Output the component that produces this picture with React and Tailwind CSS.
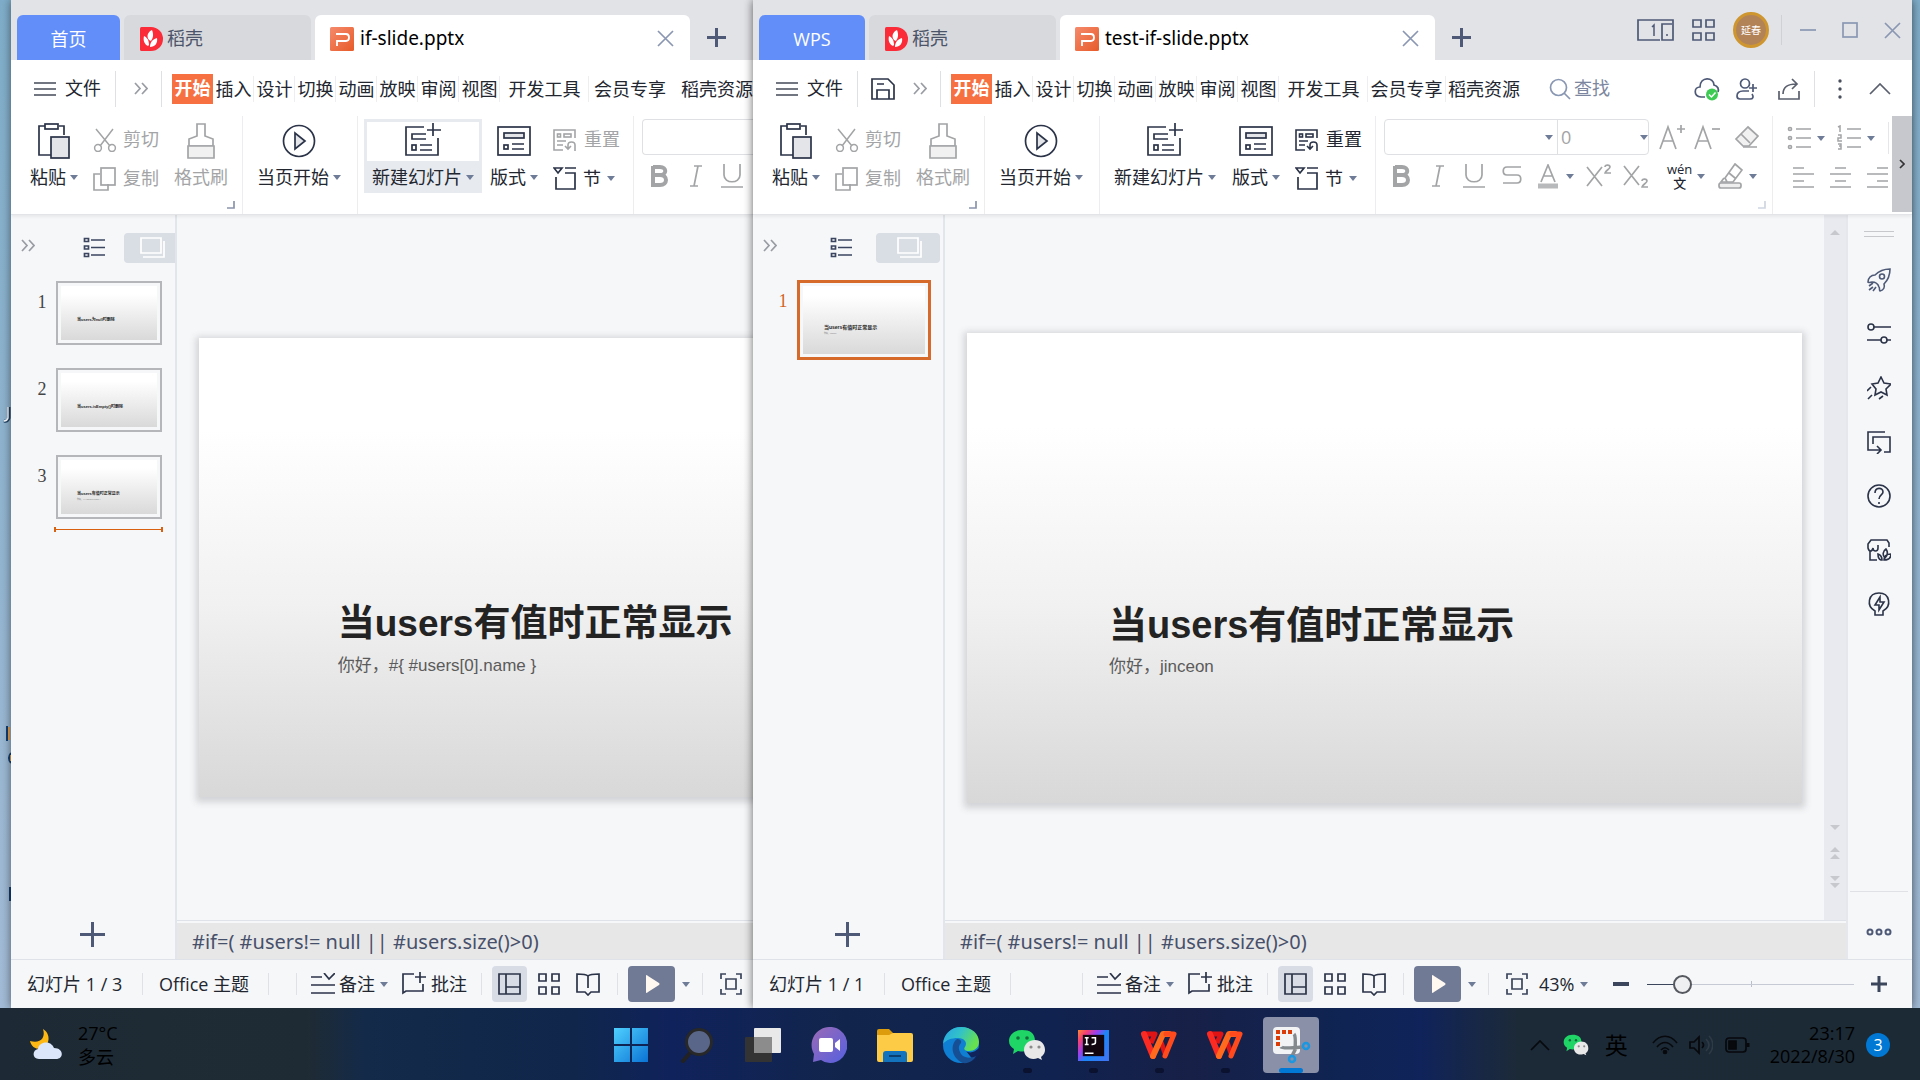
import React from "react";

const DARK = "#2b3348";
const SLATE = "#4d5976";
const MUTE = "#a3a4a6";

function Ic({ w = 24, h = 24, c = DARK, sw = 1.7, fill = "none", children, className = "" }) {
  return (
    <svg width={w} height={h} viewBox={`0 0 ${w} ${h}`} fill={fill} stroke={c} strokeWidth={sw} className={`shrink-0 ${className}`} aria-hidden="true">
      {children}
    </svg>
  );
}

const Caret = ({ c = "#6f7c98" }) => (
  <Ic w={8} h={5} c="none" fill={c}><path d="M0 0h8L4 5z" /></Ic>
);

/* ---------- ribbon icons ---------- */
const PasteIcon = () => (
  <Ic w={34} h={36}>
    <path d="M8 3H2v29h12M22 3h5v9" />
    <rect x="8" y="1" width="13" height="5" />
    <rect x="14" y="14" width="18" height="21" fill="#e3e5e8" />
  </Ic>
);
const CutIcon = () => (
  <Ic c={MUTE} sw={1.5}>
    <path d="M3 1l14 17M20 1L7 18" />
    <circle cx="5" cy="20" r="3.4" /><circle cx="19" cy="20" r="3.4" />
  </Ic>
);
const CopyIcon = () => (
  <Ic c={MUTE}>
    <path d="M7 7H1v16h14v-6" /><rect x="8" y="1" width="14" height="17" />
  </Ic>
);
const BrushIcon = () => (
  <Ic w={30} h={36} c={MUTE}>
    <path d="M11 1h8v12l8 3v7H3v-7l8-3z" fill="#fff" />
    <path d="M2 23h26v12H2z" fill="#f1f1f1" />
  </Ic>
);
const PlayCircle = () => (
  <Ic w={34} h={34}><circle cx="17" cy="17" r="15.5" /><path d="M13 9v16l10-8z" fill="#e3e5e8" /></Ic>
);
const NewSlideIcon = () => (
  <Ic w={38} h={34}>
    <path d="M20 4H2v28h32V15M29 0v13M23 7h14" />
    <path d="M22 11H8v5h14M16 22h12M16 27h12" /><rect x="8" y="22" width="4" height="5" />
  </Ic>
);
const LayoutIcon = () => (
  <Ic w={34} h={30}>
    <rect x="1" y="1" width="32" height="28" /><rect x="7" y="7" width="20" height="5" fill="#e3e5e8" />
    <rect x="7" y="19" width="4" height="4" /><path d="M15 18h12M15 23h12" />
  </Ic>
);
const ResetIcon = ({ c }) => (
  <Ic w={24} h={24} c={c} sw={1.6}>
    <path d="M10 22H1V2h21v8" /><rect x="4.500" y="6" width="3" height="3" /><rect x="11" y="6" width="7" height="3" />
    <path d="M4 13h9M4 17h6M12 18l3 3 3-3M15 20v-3c0-4 7-4 7 0v6" />
  </Ic>
);
const SectionIcon = () => (
  <Ic w={24} h={25}><path d="M1 2h8L5 7zM12 2h11M12 7h10v16H3V11" /></Ic>
);
const CornerIcon = ({ c = "#8a94aa" }) => <Ic w={8} h={8} c={c}><path d="M7 0v7H0" /></Ic>;

const Letter = ({ children, sup, minus }) => (
  <Ic w={26} h={26} c={MUTE}>
    {children}
    {sup && <path d="M22 1v8M18 5h8" />}
    {minus && <path d="M18 5h8" />}
  </Ic>
);
const EraserIcon = () => (
  <Ic w={26} h={24} c={MUTE}><path d="M14 2l10 9-9 10H9l-7-7z" fill="#f1f1f1" /><path d="M7 9l9 9M9 22h14" /></Ic>
);
const BulletsIcon = () => (
  <Ic w={25} h={24} c={MUTE}>
    <path d="M9 3h15M9 12h15M9 21h15" /><circle cx="3" cy="3" r="1.500" /><circle cx="3" cy="12" r="1.500" /><circle cx="3" cy="21" r="1.500" />
  </Ic>
);
const NumbersIcon = () => (
  <Ic w={25} h={26} c={MUTE}>
    <path d="M10 4h14M10 13h14M10 22h14" />
    <path d="M1 2l2-1v6M1 10h3v3H1v3h4M1 19h3v5H1M2 21h2" strokeWidth="1.500" />
  </Ic>
);
const AlignIcon = ({ d }) => <Ic w={22} h={22} c={MUTE}><path d={d} /></Ic>;

/* The narrow window sits partly behind the wide one and shows a shortened ribbon. */
function Ribbon({ narrow }) {
  return (
    <div className="relative flex h-[99px] shrink-0 overflow-hidden border-b border-[#e2e4e8] bg-white shadow-[0_2px_3px_rgba(0,0,0,0.06)]">
      <section className="relative flex w-[232px] shrink-0 gap-[15px] border-r border-[#ededf0] pl-[19px]">
        <BigButton icon={<PasteIcon />} label="粘贴" caret />
        <div className="flex flex-col pt-1 text-[#a3a4a6]">
          <button className="flex h-[39px] items-center gap-[6px]"><CutIcon />剪切</button>
          <button className="flex h-[39px] items-center gap-[6px]"><CopyIcon />复制</button>
        </div>
        <BigButton icon={<BrushIcon />} label="格式刷" muted />
        <span className="absolute bottom-[5px] right-[7px]"><CornerIcon /></span>
      </section>
      <section className="flex w-[115px] shrink-0 border-r border-[#ededf0] pl-[14px]">
        <BigButton icon={<PlayCircle />} label="当页开始" caret />
      </section>
      <RibbonSlides active={narrow} />
      <RibbonFont narrow={narrow} />
      {!narrow && (
        <>
          <section className="flex min-w-0 flex-1 flex-col overflow-hidden pl-[14px] pt-[3px]">
            <div className="flex h-[38px] shrink-0 items-center">
              <button aria-label="项目符号" className="flex items-center gap-[5px]"><BulletsIcon /><Caret /></button>
              <button aria-label="编号" className="ml-[12px] flex items-center gap-[5px]"><NumbersIcon /><Caret /></button>
              <i className="ml-[13px] h-8 w-px shrink-0 bg-[#e6e6ea]" />
            </div>
            <div className="ml-[6px] mt-[2px] flex h-9 shrink-0 items-center gap-[15px]">
              <button aria-label="左对齐"><AlignIcon d="M0 2h11M0 8h21M0 15h11M0 21h21" /></button>
              <button aria-label="居中"><AlignIcon d="M5 2h11M0 8h21M5 15h11M0 21h21" /></button>
              <button aria-label="右对齐"><AlignIcon d="M10 2h11M0 8h21M10 15h11M0 21h21" /></button>
            </div>
          </section>
          <button aria-label="向右滚动" className="mb-[2px] flex w-5 shrink-0 items-center justify-center bg-[#c7c8ce]">
            <Ic w={6} h={10} c="#333"><path d="M1 1l4 4-4 4" /></Ic>
          </button>
        </>
      )}
    </div>
  );
}

function BigButton({ icon, label, caret, muted, className = "" }) {
  return (
    <button className={`flex shrink-0 flex-col items-center pt-[6px] ${muted ? "text-[#a3a4a6]" : ""} ${className}`}>
      <span className="flex h-[38px] items-center">{icon}</span>
      <span className="mt-[5px] flex h-6 items-center gap-[4px] whitespace-nowrap">{label}{caret && <Caret />}</span>
    </button>
  );
}

function RibbonSlides({ active }) {
  return (
    <section className="flex w-[276px] shrink-0 border-r border-[#ededf0] pl-[6px]">
      <button className={`mt-[3px] flex h-[74px] w-[118px] shrink-0 flex-col items-center p-[3px] ${active ? "bg-[#e7eaef]" : ""}`}>
        <span className={`flex h-[39px] w-full items-center justify-center pb-1 ${active ? "bg-white" : ""}`}><NewSlideIcon /></span>
        <span className="mt-[4px] flex h-6 items-center gap-[4px] whitespace-nowrap">新建幻灯片<Caret /></span>
      </button>
      <BigButton icon={<LayoutIcon />} label="版式" caret className="ml-[8px]" />
      <div className="ml-[15px] flex flex-col pt-1">
        <button className={`flex h-[39px] items-center gap-[7px] whitespace-nowrap ${active ? "text-[#a3a4a6]" : ""}`}><ResetIcon c={active ? MUTE : DARK} />重置</button>
        <button className="flex h-[39px] items-center gap-[6px] whitespace-nowrap"><SectionIcon />节<Caret /></button>
      </div>
    </section>
  );
}

function RibbonFont({ narrow }) {
  return (
    <section className={`relative border-[#ededf0] pl-[8px] pt-[3px] ${narrow ? "min-w-0 flex-1 overflow-hidden" : "w-[397px] shrink-0 border-r"}`}>
      <div className="flex h-9 items-center">
        {narrow ? (
          <input aria-label="字体" className="h-9 w-full rounded-l-sm border border-r-0 border-[#dfe0e3] px-2 outline-none" />
        ) : (
          <>
            <div className="flex h-9 w-[265px] shrink-0 items-center rounded-sm border border-[#dfe0e3] pr-[4px]">
              <input aria-label="字体" className="h-full w-[160px] px-2 outline-none" />
              <Caret />
              <input aria-label="字号" defaultValue="0" className="ml-[4px] h-full w-[83px] border-l border-[#dfe0e3] pl-[3px] text-[#a3a4a6] outline-none" />
              <Caret />
            </div>
            <button aria-label="增大字号" className="ml-[10px]"><Letter sup><path d="M1 25L9 3l8 22M4 17h10" /></Letter></button>
            <button aria-label="减小字号" className="ml-[9px]"><Letter minus><path d="M1 25L9 3l8 22M4 17h10" /></Letter></button>
            <button aria-label="清除格式" className="ml-[14px]"><EraserIcon /></button>
          </>
        )}
      </div>
      <div className="mt-[3px] flex h-9 items-center">
        <button aria-label="加粗" className="ml-[8px] shrink-0"><Ic w={19} h={24} c={MUTE} sw={4}><path d="M3 3h7c7 0 7 8 0 8H3M10 11c8 0 8 10 0 10H3V2" /></Ic></button>
        <button aria-label="倾斜" className="ml-[20px] shrink-0"><Ic w={14} h={24} c={MUTE}><path d="M5 2h8M1 22h8M9 2L5 22" /></Ic></button>
        <button aria-label="下划线" className="ml-[17px] shrink-0"><Ic w={24} h={25} c={MUTE}><path d="M4 0v11c0 9 16 9 16 0V0M1 23h22" /></Ic></button>
        {!narrow && (
          <>
            <button aria-label="删除线" className="ml-[15px]"><Ic w={22} h={24} c={MUTE}><path d="M20 3H6C1 3 1 11 6 11h10c5 0 5 8 0 8H2" /></Ic></button>
            <button aria-label="字体颜色" className="ml-[14px] flex items-center gap-[7px]">
              <Ic w={22} h={25} c={MUTE}><path d="M4 18L11 1l7 17M6 12h10" /><path d="M1 22h20" strokeWidth="5" stroke="#b8b9ba" /></Ic><Caret />
            </button>
            <button aria-label="上标" className="ml-[12px]"><Ic w={26} h={24} c={MUTE}><path d="M1 3l15 19M16 3L1 22M19 3c0-3 5-2 5 0 0 2-5 4-5 6h6" /></Ic></button>
            <button aria-label="下标" className="ml-[11px]"><Ic w={26} h={26} c={MUTE}><path d="M1 3l15 19M16 3L1 22M19 18c0-3 5-2 5 0 0 2-5 4-5 6h6" /></Ic></button>
            <button aria-label="拼音指南" className="ml-[18px] flex items-center gap-[5px]">
              <span className="text-[13px] font-medium leading-[14px] text-[#20242f]">wén<br />文</span><Caret />
            </button>
            <button aria-label="突出显示" className="ml-[13px] flex items-center gap-[6px]">
              <Ic w={25} h={26} c={MUTE}><path d="M17 1l7 6-9 12H9l-2-4zM6 15l-3 4h6M11 10l6 5" /><rect x="1" y="20" width="22" height="5" rx="2" fill="#eee" /></Ic><Caret />
            </button>
          </>
        )}
      </div>
      {!narrow && <span className="absolute bottom-[5px] right-[6px]"><CornerIcon c="#d0d5df" /></span>}
    </section>
  );
}

/* ---------- tabs and menu ---------- */
const DocerLogo = () => (
  <svg width="23" height="24" viewBox="0 0 23 24" aria-hidden="true" className="shrink-0">
    <path d="M0 1.500Q0 0 1.500 0H11a12 12 0 0 1 0 24H1.500Q0 24 0 22.500z" fill="#fb2b38" />
    <path d="M9 13C6 9 8 5 12 3c2 5 1 8-1 11zM8 19C4 17 3 13 4 9c4 2 5 5 5 9zM10 20c0-5 3-8 7-9 1 5-2 9-7 9z" fill="#fff" />
  </svg>
);
const PptLogo = () => (
  <svg width="24" height="24" viewBox="0 0 24 24" aria-hidden="true" className="shrink-0">
    <defs><linearGradient id="pp" x1="0" y1="0" x2="1" y2="1"><stop offset="0" stopColor="#f58a6c" /><stop offset="1" stopColor="#e75b29" /></linearGradient></defs>
    <rect width="24" height="24" rx="1.500" fill="url(#pp)" />
    <path d="M6 7h10c4 0 4 7 0 7H7v5" fill="none" stroke="#fff" strokeWidth="1.800" />
  </svg>
);
const CloseX = ({ c = "#8a97b3" }) => <Ic w={17} h={17} c={c}><path d="M1 1l15 15M16 1L1 16" /></Ic>;

function TabBar({ home, homeWidth, file, controls }) {
  return (
    <header className="flex h-[60px] shrink-0 items-end overflow-hidden bg-[#e2e3e7] pl-[6px]">
      <button className={`h-[45px] shrink-0 rounded-t-md bg-[#628efa] pt-[3px] text-white ${homeWidth}`}>{home}</button>
      <button className="ml-1 flex h-[45px] w-[187px] shrink-0 items-center gap-[4px] rounded-t-md bg-[#d8d9dd] pl-4 pt-[2px] text-[#4b5468]"><DocerLogo />稻壳</button>
      <div className="ml-1 flex h-[45px] w-[375px] shrink-0 items-center rounded-t-md bg-white pl-[15px] pr-[16px] pt-[2px] text-[19px] text-black">
        <PptLogo /><span className="ml-[6px] flex-1 font-['Noto_Sans']">{file}</span>
        <button aria-label="关闭标签"><CloseX /></button>
      </div>
      <button aria-label="新建标签" className="mb-[13px] ml-[17px] shrink-0"><Ic w={19} h={19} c={SLATE} sw={3}><path d="M9.500 0v19M0 9.500h19" /></Ic></button>
      {controls && (
        <div className="ml-auto flex h-[60px] shrink-0 items-center pr-[11px]">
          <button aria-label="窗口布局"><Ic w={37} h={22} c={SLATE}><path d="M23 21H1V1h35v20H25V5h10" /><path d="M31 16h-2M17 17V6l-2 2" strokeWidth="1.500" /></Ic></button>
          <button aria-label="应用" className="ml-[18px]"><Ic w={23} h={22} c={SLATE}><path d="M1 1h8v7H1zM14 1h8v7h-8zM1 14h8v7H1zM14 14h8v7h-8z" /></Ic></button>
          <button className="ml-[18px] flex size-9 items-center justify-center rounded-full border-[3px] border-[#cf962f] bg-[#b38358] text-[10px] text-white">延春</button>
          <i className="ml-3 mr-[18px] h-[30px] w-px bg-[#cfd1d7]" />
          <button aria-label="最小化"><Ic w={16} h={16} c="#8a97b3"><path d="M0 8h16" /></Ic></button>
          <button aria-label="最大化" className="ml-[26px]"><Ic w={16} h={16} c="#8a97b3"><rect x="1" y="1" width="14" height="14" /></Ic></button>
          <button aria-label="关闭" className="ml-[26px]"><CloseX /></button>
        </div>
      )}
    </header>
  );
}

const MENUS = ["插入", "设计", "切换", "动画", "放映", "审阅", "视图"];
const DoubleChevron = () => <Ic w={14} h={13} c="#999ca3"><path d="M1 1l5 5.500L1 12M8 1l5 5.500L8 12" /></Ic>;
const Bar = ({ className = "" }) => <i className={`h-9 w-px shrink-0 bg-[#dfe0e4] ${className}`} />;

function MenuBar({ save, tools }) {
  return (
    <nav className="flex h-14 shrink-0 items-center overflow-hidden whitespace-nowrap bg-white pl-[23px] pt-px">
      <button className="flex shrink-0 items-center gap-[9px]"><Ic w={22} h={16} c="#444a58"><path d="M0 2h22M0 8h22M0 14h22" /></Ic>文件</button>
      <Bar className="ml-[14px]" />
      {save && <button aria-label="保存" className="ml-[13px] shrink-0"><Ic w={24} h={22}><path d="M1 1h16l6 6v14H1zM6 21v-9h12v9M6 6h7" /></Ic></button>}
      <button aria-label="更多命令" className="ml-[18px] shrink-0"><DoubleChevron /></button>
      <Bar className="ml-[13px]" />
      <button className="ml-[10px] h-[30px] w-[41px] shrink-0 bg-[#f77042] font-bold text-white">开始</button>
      {MENUS.map((m) => (
        <button key={m} className="h-[26px] w-[41px] shrink-0 border-r border-[#eeeef0] pl-px leading-[24px]">{m}</button>
      ))}
      <button className="h-[26px] w-[89px] shrink-0 border-r border-[#eeeef0] pl-px leading-[24px]">开发工具</button>
      <button className={`h-[26px] shrink-0 leading-[24px] ${tools ? "w-[78px] border-r border-[#eeeef0]" : "w-[82px]"}`}>会员专享</button>
      <button className={`h-[26px] shrink-0 leading-[24px] ${tools ? "ml-[2px]" : "ml-[10px]"}`}>稻壳资源</button>
      {tools && (
        <>
          <label className="ml-[29px] flex min-w-0 items-center gap-[3px]">
            <Ic w={22} h={22} c="#8a97b3"><circle cx="9.500" cy="9.500" r="8" /><path d="M15 15l6 6" /></Ic>
            <input aria-label="查找" placeholder="查找" className="w-[70px] outline-none placeholder:text-[#7c869e]" />
          </label>
          <div className="ml-auto flex shrink-0 items-center pr-[21px]">
            <button aria-label="云同步"><Ic w={26} h={24} c={SLATE}><path d="M11 20H7C-1 19 0 10 6 10 6 -1 20 0 20 8c4 1 5 4 4 7" /><circle cx="18" cy="17.500" r="6" fill="#3ecb53" stroke="none" /><path d="M15 17.500l2.500 2.500 4-4.500" stroke="#fff" strokeWidth="1.500" /></Ic></button>
            <button aria-label="协作" className="ml-[16px]"><Ic w={22} h={22} c={SLATE}><circle cx="9" cy="5.500" r="4.500" /><path d="M13 13H7c-4 0-6 2-6 5 0 2 1 3 3 3h10c3 0 4-2 2-5M17 6v8M13 10h8" /></Ic></button>
            <button aria-label="分享" className="ml-[20px]"><Ic w={22} h={22} c="#5a5f6d"><path d="M1 13v8h20v-8M5 16C5 9 10 6 18 6M14 1l5 5-5 5" /></Ic></button>
            <Bar className="ml-[14px]" />
            <button aria-label="更多" className="ml-[23px]"><Ic w={4} h={20} c="none" fill="#4a4f5d"><circle cx="2" cy="2" r="1.700" /><circle cx="2" cy="10" r="1.700" /><circle cx="2" cy="18" r="1.700" /></Ic></button>
            <button aria-label="收起功能区" className="ml-[27px]"><Ic w={22} h={12} c="#5a5f6d"><path d="M1 11L11 1l10 10" /></Ic></button>
          </div>
        </>
      )}
    </nav>
  );
}

/* ---------- slide panel ---------- */
function Thumb({ n, title, sub, active }) {
  return (
    <li className="flex items-start">
      <span className={`w-[12px] shrink-0 pt-[9px] text-center font-['Liberation_Serif'] text-[18px] leading-[24px] ${active ? "mr-[8px] text-[#d4621e]" : "mr-[8px] text-[#444]"}`}>{n}</span>
      <button className={`shrink-0 overflow-hidden text-left font-['Liberation_Sans','Noto_Sans_CJK_SC',sans-serif] ${active ? "h-20 w-[134px] border-[3px] border-[#d66a2b] p-[3px]" : "h-16 w-[106px] border-2 border-[#b5b6b9] p-[3px]"}`}>
        <span className="block h-full w-full bg-linear-to-b from-white from-15% to-[#d9d9d9]">
          <span className={`block whitespace-nowrap font-bold text-[#222] ${active ? "pl-[21px] pt-[37px] text-[5px] leading-[8px]" : "pl-[16px] pt-[30px] text-[4px] leading-[7px]"}`}>{title}</span>
          {sub && <span className={`block whitespace-nowrap text-[2px] leading-[4px] text-[#777] ${active ? "pl-[21px]" : "pl-[16px]"}`}>{sub}</span>}
        </span>
      </button>
    </li>
  );
}

function SlidePanel({ wide, slides }) {
  return (
    <aside className={`flex shrink-0 flex-col overflow-hidden border-r-2 border-[#e3e5ec] ${wide ? "w-[192px]" : "w-[166px]"}`}>
      <div className="mt-[17px] flex h-[31px] shrink-0 items-center">
        <button aria-label="展开面板" className="mb-1 ml-[10px] shrink-0"><DoubleChevron /></button>
        <button aria-label="大纲" className={`shrink-0 ${wide ? "ml-[53px]" : "ml-[48px]"}`}>
          <Ic w={22} h={21} c="#3b4560"><path d="M8 3h14M8 10.500h14M8 18h14M1.500 1.500h4v3h-4zM1.500 9h4v3h-4zM1.500 16.500h4v3h-4z" /></Ic>
        </button>
        <button aria-label="幻灯片" className={`flex h-[30px] w-16 shrink-0 items-center rounded bg-[#d9dde4] ${wide ? "ml-[24px] pl-[21px]" : "ml-[19px] pl-[16px]"}`}>
          <Ic w={25} h={21} c="#fff"><path d="M1 1h20v15H1zM3 20h21V4" /></Ic>
        </button>
      </div>
      <ol className={`flex flex-col ${wide ? "mt-[17px] pl-[24px]" : "mt-[18px] gap-[23px] pl-[25px]"}`}>
        {slides.map((s) => <Thumb key={s.n} {...s} />)}
      </ol>
      {!wide && <Ic w={109} h={5} c="#d9600f" sw={1} className="ml-[43px] mt-[8px]"><path d="M0 2.500h109" /><path d="M1 0v5M108 0v5" strokeWidth="2" /></Ic>}
      <button aria-label="新建幻灯片" className={`mb-[12px] mt-auto ${wide ? "ml-[82px]" : "ml-[69px]"}`}>
        <Ic w={25} h={25} c={SLATE} sw={3}><path d="M12.500 0v25M0 12.500h25" /></Ic>
      </button>
    </aside>
  );
}

function Slide({ title, titleSize, sub, className }) {
  return (
    <article className={`aspect-[835/470] bg-linear-to-b from-white from-20% via-[#f1f1f1] via-58% to-[#d8d8d8] shadow-[0_2px_7px_3px_rgba(60,64,72,0.2)] ${className}`}>
      <div className="w-full whitespace-nowrap pl-[17%] pt-[32%] font-['Liberation_Sans','Noto_Sans_CJK_SC',sans-serif]">
        <h1 className={`h-[50px] font-bold leading-[50px] text-[#232323] ${titleSize}`}>{title}</h1>
        <p className="mt-[5px] text-[17px] leading-6 text-[#5b5b5b]">{sub}</p>
      </div>
    </article>
  );
}

const Notes = () => (
  <div className="h-[39px] shrink-0 border-t border-[#dfe2e8] bg-[#f5f7f9] pt-[2px]">
    <input aria-label="备注" defaultValue="#if=( #users!= null || #users.size()>0)" className="block h-full w-full bg-[#e7e7e7] pl-[15px] font-['Noto_Sans'] text-[20px] text-[#47506a] outline-none" />
  </div>
);

/* ---------- status bar ---------- */
const Sep = ({ className = "" }) => <i className={`h-[22px] w-px shrink-0 bg-[#dfe1e7] ${className}`} />;

function StatusBar({ page, gap, zoom }) {
  return (
    <footer className="flex h-[49px] shrink-0 items-center overflow-hidden whitespace-nowrap border-t border-[#dfe2e8] bg-[#f6f7f9] pl-[16px] text-[#22262f]">
      <span className="w-[115px] shrink-0">{page}</span>
      <Sep />
      <span className="ml-4 w-[109px] shrink-0">Office 主题</span>
      <Sep />
      <Sep className={gap} />
      <button className="ml-[14px] flex shrink-0 items-center gap-[4px]"><Ic w={24} h={22}><path d="M0 4h11M0 12h24M0 20h24M13 0l5 6 6-6" /></Ic>备注<span className="ml-px"><Caret /></span></button>
      <button className="ml-[14px] flex shrink-0 items-center gap-[4px]"><Ic w={25} h={24}><path d="M12 2H1v19l3-2h17V12M18 0v11M13 5h11" /></Ic>批注</button>
      <Sep className="ml-[14px]" />
      <button aria-label="普通视图" className="ml-[10px] flex h-9 w-[35px] shrink-0 items-center justify-center rounded bg-[#d8dce5]"><Ic w={23} h={22}><path d="M1 1h21v20H1zM8 1v20M8 14h14" /></Ic></button>
      <button aria-label="幻灯片浏览" className="ml-[11px] shrink-0"><Ic w={22} h={22}><path d="M1 1h7v7H1zM14 1h7v7h-7zM1 14h7v7H1zM14 14h7v7h-7z" /></Ic></button>
      <button aria-label="阅读视图" className="ml-[16px] shrink-0"><Ic w={24} h={23}><path d="M12 3C10 1 6 1 1 1v18h8l3 3 3-3h8V1C18 1 14 1 12 3v12" /></Ic></button>
      <Sep className="ml-[17px]" />
      <button aria-label="放映" className="ml-[10px] flex h-9 w-[47px] shrink-0 items-center justify-center rounded bg-[#707a95]"><Ic w={14} h={18} c="none" fill="#fff8f0" className="ml-[3px]"><path d="M0 1Q0 -1 2 1l11 7q1 1 0 2L2 17Q0 19 0 17z" /></Ic></button>
      <button aria-label="放映选项" className="ml-[7px] shrink-0"><Caret /></button>
      <Sep className="ml-[12px]" />
      <button aria-label="适应窗口" className="ml-[17px] shrink-0"><Ic w={22} h={22} c="#3b455c"><path d="M1 6V1h5M16 1h5v5M21 16v5h-5M6 21H1v-5M6 6h10v10H6z" /></Ic></button>
      {zoom && (
        <>
          <button className="ml-[11px] flex shrink-0 items-center gap-[6px]">43%<Caret /></button>
          <button aria-label="缩小" className="ml-auto shrink-0"><Ic w={16} h={4} c="#3b455c" sw={4}><path d="M0 2h16" /></Ic></button>
          <div className="relative ml-[18px] flex w-[207px] shrink-0 items-center">
            <i className="absolute left-1/2 h-[6px] w-px bg-[#b9bfca]" />
            <input type="range" aria-label="缩放" min="0" max="100" defaultValue="14" className="relative h-5 w-full appearance-none bg-transparent [&::-webkit-slider-runnable-track]:h-px [&::-webkit-slider-runnable-track]:bg-[linear-gradient(to_right,#3b455c_16%,#c5cad4_16%)] [&::-webkit-slider-thumb]:-mt-[9px] [&::-webkit-slider-thumb]:size-[19px] [&::-webkit-slider-thumb]:appearance-none [&::-webkit-slider-thumb]:rounded-full [&::-webkit-slider-thumb]:border-2 [&::-webkit-slider-thumb]:border-[#55585f] [&::-webkit-slider-thumb]:bg-[#eeeff0]" />
          </div>
          <button aria-label="放大" className="ml-[17px] mr-[25px] shrink-0"><Ic w={16} h={16} c="#3b455c" sw={3}><path d="M8 0v16M0 8h16" /></Ic></button>
        </>
      )}
    </footer>
  );
}

/* ---------- right tool strip ---------- */
const TOOLS = [
  ["推荐", <g key="a" stroke={SLATE}><path d="M8 7C12 3 17 1 23 1c0 7-2 11-6 15 1 3 0 6-4 7-1 0 0-3-1-4-1-3-4-5-7-5-1 0-4 1-4 0 0-4 3-7 7-7zM2 18l4-3M2 22l4-3M6 23l3-4" /><circle cx="15" cy="8.500" r="2.500" /></g>],
  ["设置", <g key="b"><circle cx="4" cy="5" r="3" /><path d="M7 5h17M0 18h14M20 18h4" /><circle cx="17" cy="18" r="3" /></g>],
  ["动画", <g key="c"><path d="M14 1l3 6 7 1-5 5 1 6-6-3-6 3 1-6-4-5 6-1zM0 15l4-4M1 23l4-4M12 23l4-3" /></g>],
  ["切换", <g key="d"><path d="M18 2H1v18h12M10 16l4 4-4 4M6 14V7h17v15h-6" /></g>],
  ["帮助", <g key="e"><circle cx="12" cy="12" r="11" /><path d="M8 9c0-6 8-6 8-1 0 3-4 3-4 7M12 18v2" /></g>],
  ["稻壳商城", <g key="f"><path d="M22 9V5l-2-3H4L1 6v4c1 4 4 4 5 0 0 4 5 4 5 0V7M3 13v9h7M14 22c-3-1-3-4-3-6 3 1 4 3 4 6zM18 20c-3-3-2-7 1-9 2 3 2 6-1 9zM17 22c0-4 3-6 7-6 0 4-3 6-7 6z" /></g>],
  ["灵感", <g key="g"><path d="M8 23v-4C-1 14 1 1 12 1s13 13 4 18v4zM13 5l-5 8h4v5l5-8h-4z" /></g>],
];

function ToolStrip() {
  return (
    <aside className="flex w-[66px] shrink-0 flex-col items-center border-l-2 border-[#e6e7ed] pr-[2px]">
      <i className="mt-4 h-[6px] w-[30px] shrink-0 border-y border-[#c6c8cc]" />
      <div className="mt-[31px] flex flex-col gap-[30px]">
        {TOOLS.map(([name, g]) => <button key={name} aria-label={name}><Ic sw={1.6}>{g}</Ic></button>)}
      </div>
      <div className="mt-auto flex h-[68px] w-[58px] shrink-0 items-center justify-center border-t border-[#dfe1e7] pt-3">
        <button aria-label="更多工具"><Ic w={26} h={8} c={SLATE} sw={2}><circle cx="4" cy="4" r="2.500" /><circle cx="13" cy="4" r="2.500" /><circle cx="22" cy="4" r="2.500" /></Ic></button>
      </div>
    </aside>
  );
}

function Scrollbar() {
  const c = "#c6c8cd";
  return (
    <div className="flex w-[22px] shrink-0 flex-col items-center bg-[#e9eaf0]">
      <Ic w={10} h={5} c="none" fill={c} className="mt-[15px]"><path d="M0 5h10L5 0z" /></Ic>
      <Ic w={10} h={5} c="none" fill={c} className="mt-auto"><path d="M0 0h10L5 5z" /></Ic>
      <Ic w={10} h={12} c="none" fill={c} className="mt-[17px]"><path d="M0 5h10L5 0zM0 12h10L5 7z" /></Ic>
      <Ic w={10} h={12} c="none" fill={c} className="mb-[32px] mt-[17px]"><path d="M0 0h10L5 5zM0 7h10L5 12z" /></Ic>
    </div>
  );
}

/* ---------- taskbar ---------- */
const WeChat = ({ s = 38 }) => (
  <svg width={s} height={s} viewBox="0 0 38 38" aria-hidden="true">
    <path d="M14 4C6 4 1 9 1 15c0 4 2 6 5 8l-1 5 5-3c9 2 17-2 17-10S22 4 14 4z" fill="#1fd566" />
    <path d="M27 14c-6 0-11 4-11 10s6 11 14 8l4 2-1-3c3-2 4-5 4-7 0-6-4-10-10-10z" fill="#e8e8e8" />
    <g fill="#156b3a"><circle cx="10" cy="12" r="1.800" /><circle cx="19" cy="12" r="1.800" /></g>
    <g fill="#8a8a8a"><circle cx="23" cy="21" r="1.600" /><circle cx="31" cy="21" r="1.600" /></g>
  </svg>
);
const WpsLogo = () => (
  <svg width="38" height="34" viewBox="0 0 38 34" fill="none" strokeLinejoin="round" aria-hidden="true">
    <path d="M4 6h11l-4 9" stroke="#e01414" strokeWidth="5" />
    <path d="M4 6l9 22" stroke="#fb2a22" strokeWidth="6" strokeLinecap="round" />
    <path d="M21 14l5 14" stroke="#e01414" strokeWidth="5" />
    <path d="M13 28L23 6h6" stroke="#ff6a1e" strokeWidth="6" strokeLinecap="round" />
    <path d="M25 28l9-22h-8" stroke="#ff4a1e" strokeWidth="5" strokeLinecap="round" />
  </svg>
);
const APPS = [
  ["开始", <svg key="w" width="36" height="36" viewBox="0 0 36 36"><defs><linearGradient id="wn" x1="0" y1="0" x2="1" y2="1"><stop offset="0" stopColor="#4fd0ff" /><stop offset="1" stopColor="#0b73d4" /></linearGradient></defs><path d="M1 1h16v16H1zM19 1h16v16H19zM1 19h16v16H1zM19 19h16v16H19z" fill="url(#wn)" /></svg>],
  ["搜索", <svg key="s" width="36" height="36" viewBox="0 0 36 36"><path d="M11 26l-7 8" stroke="#222" strokeWidth="4" strokeLinecap="round" /><circle cx="20" cy="15" r="12.500" fill="#5a6689" stroke="#282828" strokeWidth="3" /></svg>],
  ["任务视图", <svg key="t" width="36" height="36" viewBox="0 0 36 36"><rect x="9" y="1" width="27" height="25" rx="1" fill="#e9e9e9" /><rect x="0" y="10" width="27" height="25" rx="1" fill="#333" /><path d="M9 10h18v16H9z" fill="#8c8c8c" /></svg>],
  ["聊天", <svg key="c" width="36" height="36" viewBox="0 0 36 36"><defs><linearGradient id="ch" x1="0" y1="0" x2="1" y2="1"><stop offset="0" stopColor="#9b6ab5" /><stop offset="1" stopColor="#5560e0" /></linearGradient></defs><path d="M18 0a17 18 0 1 1-8 33l-8 2 1-8A18 18 0 0 1 18 0z" fill="url(#ch)" /><rect x="8" y="11" width="14" height="14" rx="2" fill="#fff" /><path d="M24 16l5-4v12l-5-4z" fill="#fff" /></svg>],
  ["文件资源管理器", <svg key="e" width="38" height="36" viewBox="0 0 38 36"><path d="M1 4q0-2 2-2h10l4 4v8H1z" fill="#dc9c0c" /><path d="M1 8h12l4-2h18q2 0 2 2v25q0 2-2 2H3q-2 0-2-2z" fill="#fdcb45" /><path d="M7 35V27q0-3 3-3h18q3 0 3 3v8z" fill="#1373bd" /><path d="M13 29h12" stroke="#0b3f70" strokeWidth="2" /></svg>],
  ["Edge", <svg key="d" width="38" height="38" viewBox="0 0 38 38"><defs><linearGradient id="e1" x1="0" y1="0" x2="1" y2="0.400"><stop offset="0" stopColor="#27a3e6" /><stop offset="0.500" stopColor="#32c2c8" /><stop offset="1" stopColor="#66e04f" /></linearGradient></defs><circle cx="19" cy="19" r="18" fill="#0f7fd3" /><path d="M24 25c4 3 9 1 13-3l1 6-6 7z" fill="#10235a" /><path d="M1 18C2 7 10 1 19 1c11 0 18 7 18 15 0 6-5 9-10 9-4 0-6-2-4-4 3-5-1-9-7-9C9 12 4 14 1 18z" fill="url(#e1)" /><path d="M15 13c-7 5-6 19 6 24 6 1 11-3 13-7-6 3-14 2-16-4-2-4-1-7 1-9 1-3-2-4-4-4z" fill="#174f94" /></svg>],
  ["微信", <WeChat key="m" />],
  ["IntelliJ", <svg key="i" width="31" height="31" viewBox="0 0 32 32"><defs><linearGradient id="ij" x1="0" y1="0" x2="1" y2="0.800"><stop offset="0" stopColor="#fb8a32" /><stop offset="0.200" stopColor="#f43f74" /><stop offset="0.400" stopColor="#9b3ff0" /><stop offset="0.600" stopColor="#1a86f7" /><stop offset="1" stopColor="#3b76f5" /></linearGradient></defs><rect width="32" height="32" fill="url(#ij)" /><rect x="5" y="5" width="22" height="22" fill="#120510" /><path d="M7 8h4M9 8v7M7 15h4M14 8h4v5q0 2-4 2M7 24h9" stroke="#fff" strokeWidth="1.600" fill="none" /></svg>],
  ["WPS", <WpsLogo key="p" />],
  ["WPS 演示", <WpsLogo key="q" />],
  ["截图工具", <svg key="n" width="40" height="40" viewBox="0 0 40 40"><rect x="2" y="2" width="27" height="27" rx="4" fill="#f1f3f5" /><path d="M5 7h4M11 7h4M17 7h4M5 13h4M5 19h4" stroke="#dc3c08" strokeWidth="4" /><path d="M23 9q2 2 1 16l-3 6M10 22q1 2 21 0" stroke="#84898e" strokeWidth="3.500" fill="none" /><circle cx="21" cy="34" r="3" fill="none" stroke="#1b96e0" strokeWidth="2.500" /><circle cx="35" cy="21" r="3" fill="none" stroke="#1b96e0" strokeWidth="2.500" /></svg>],
];

function Taskbar() {
  return (
    <footer className="grid h-[72px] shrink-0 grid-cols-[1fr_auto_1fr] items-center bg-[linear-gradient(to_right,#1d2a35_0%,#1f2b34_16%,#132a49_19%,#10264b_30%,#10225b_35%,#11254c_44%,#10224f_55%,#172047_62%,#0f2453_70%,#10235a_74%,#1c2a38_79%,#1c2a35_100%)] pt-[2px] text-black">
      <button className="flex items-center gap-[15px] justify-self-start pl-[30px] text-left leading-6">
        <svg width="33" height="32" viewBox="0 0 33 32" aria-hidden="true"><path d="M13 0c3 9-3 15-13 12 1 5 5 8 10 8 8 0 13-14 3-20z" fill="#fdb813" /><path d="M9 30c-7 0-7-9-1-10 1-8 13-9 16-1 10 0 10 11 2 11z" fill="#dbe6fa" /></svg>
        <span><span className="block">27°C</span><span className="block">多云</span></span>
      </button>
      <div className="flex items-center gap-[10px] pl-[2px]">
        {APPS.map(([name, g], i) => (
          <button key={name} aria-label={name} className={`relative flex size-14 items-center justify-center rounded ${i === 10 ? "bg-[#8990a8]" : ""}`}>
            {g}
            {i > 5 && i < 10 && <i className="absolute bottom-0 h-[5px] w-[9px] rounded-full bg-[#0a1230]" />}
            {i === 10 && <i className="absolute bottom-0 h-[5px] w-6 rounded-full bg-[#0078d4]" />}
          </button>
        ))}
      </div>
      <div className="flex items-center justify-self-end pr-[30px]">
        <button aria-label="隐藏的图标"><Ic w={20} h={12} c="#07090c"><path d="M1 11l9-9 9 9" /></Ic></button>
        <button aria-label="微信" className="ml-[13px]"><WeChat s={26} /></button>
        <button className="ml-[16px] text-[23px]">英</button>
        <button aria-label="网络" className="ml-[24px]"><Ic w={26} h={20} c="#07090c"><path d="M1 8c7-9 17-9 24 0M5 12c5-6 11-6 16 0M9 15c3-3 5-3 8 0" /><circle cx="13" cy="17" r="1.500" fill="#07090c" /></Ic></button>
        <button aria-label="音量" className="ml-[11px]"><Ic w={24} h={20} c="#07090c"><path d="M1 7h4l5-5v16l-5-5H1zM13 7c2 2 2 4 0 6" /><path d="M17 4c4 4 4 8 0 12M20 1c5 5 5 13 0 18" stroke="#2e3a45" /></Ic></button>
        <button aria-label="电池" className="ml-[12px]"><Ic w={25} h={16} c="#07090c"><rect x="1" y="1" width="20" height="14" rx="3" /><path d="M4 4h7v8H4z" fill="#07090c" /><path d="M23 6v4" strokeWidth="3" /></Ic></button>
        <button className="ml-[20px] text-right leading-[23px]"><span className="block">23:17</span><span className="block">2022/8/30</span></button>
        <button className="ml-[11px] size-6 rounded-full bg-[#0078d4] text-[16px] leading-6 text-white">3</button>
      </div>
    </footer>
  );
}

const LEFT_SLIDES = [
  { n: 1, title: "当users为null时删除" },
  { n: 2, title: "当users.isEmpty()时删除" },
  { n: 3, title: "当users有值时正常显示", sub: "你好，#{ #users[0].name }" },
];
const RIGHT_SLIDES = [{ n: 1, title: "当users有值时正常显示", sub: "你好，jinceon", active: true }];

export default function App() {
  return (
    <div className="flex h-screen flex-col overflow-hidden font-['Open_Sans','Noto_Sans_CJK_SC',sans-serif] text-[18px] text-[#22262f]">
      <main className="relative flex min-h-0 flex-1 overflow-hidden bg-linear-to-b from-[#7fadc9] to-[#a3bbd6] pl-[11px] pr-[8px]">
        <div aria-hidden="true" className="absolute left-0 top-[400px] w-[11px]">
          <svg width="11" height="510" viewBox="0 0 11 510" fill="none">
            <path d="M9 7v11q-1 4-5 3" stroke="#1d3f63" strokeWidth="3" /><path d="M8 7v11q-1 3-4 3" stroke="#fff" strokeWidth="1.500" />
            <path d="M7 326v15M11 353q-4 5 0 10M10 487v14" stroke="#123f73" strokeWidth="2" />
            <path d="M9 327v13M11 355v6" stroke="#e9a14a" strokeWidth="2" />
          </svg>
        </div>
        <section className="relative flex min-w-0 flex-[742] flex-col overflow-hidden bg-[#f6f7f9] shadow-[0_0_9px_rgba(0,0,0,0.5)]">
          <TabBar home="首页" homeWidth="w-[103px]" file="if-slide.pptx" />
          <MenuBar />
          <Ribbon narrow />
          <div className="flex min-h-0 flex-1">
            <SlidePanel slides={LEFT_SLIDES} />
            <div className="flex min-w-0 flex-1 flex-col">
              <div className="flex min-h-0 flex-1 items-center overflow-hidden pl-[22px]">
                <Slide className="w-[816px] shrink-0" titleSize="text-[37px]" title="当users有值时正常显示" sub="你好，#{ #users[0].name }" />
              </div>
              <Notes />
            </div>
          </div>
          <StatusBar page="幻灯片 1 / 3" gap="ml-[27px]" />
        </section>
        <section className="relative flex min-w-0 flex-[1159] flex-col bg-[#f6f7f9] shadow-[0_0_9px_rgba(0,0,0,0.6)]">
          <TabBar home="WPS" homeWidth="w-[106px]" file="test-if-slide.pptx" controls />
          <MenuBar save tools />
          <Ribbon />
          <div className="flex min-h-0 flex-1">
            <SlidePanel wide slides={RIGHT_SLIDES} />
            <div className="flex min-w-0 flex-1 flex-col">
              <div className="flex min-h-0 flex-1">
                <div className="flex min-w-0 flex-1 items-center overflow-hidden px-[22px]">
                  <Slide className="w-full" titleSize="text-[38px]" title="当users有值时正常显示" sub="你好，jinceon" />
                </div>
                <Scrollbar />
              </div>
              <Notes />
            </div>
            <ToolStrip />
          </div>
          <StatusBar page="幻灯片 1 / 1" gap="ml-[71px]" zoom />
        </section>
      </main>
      <Taskbar />
    </div>
  );
}
